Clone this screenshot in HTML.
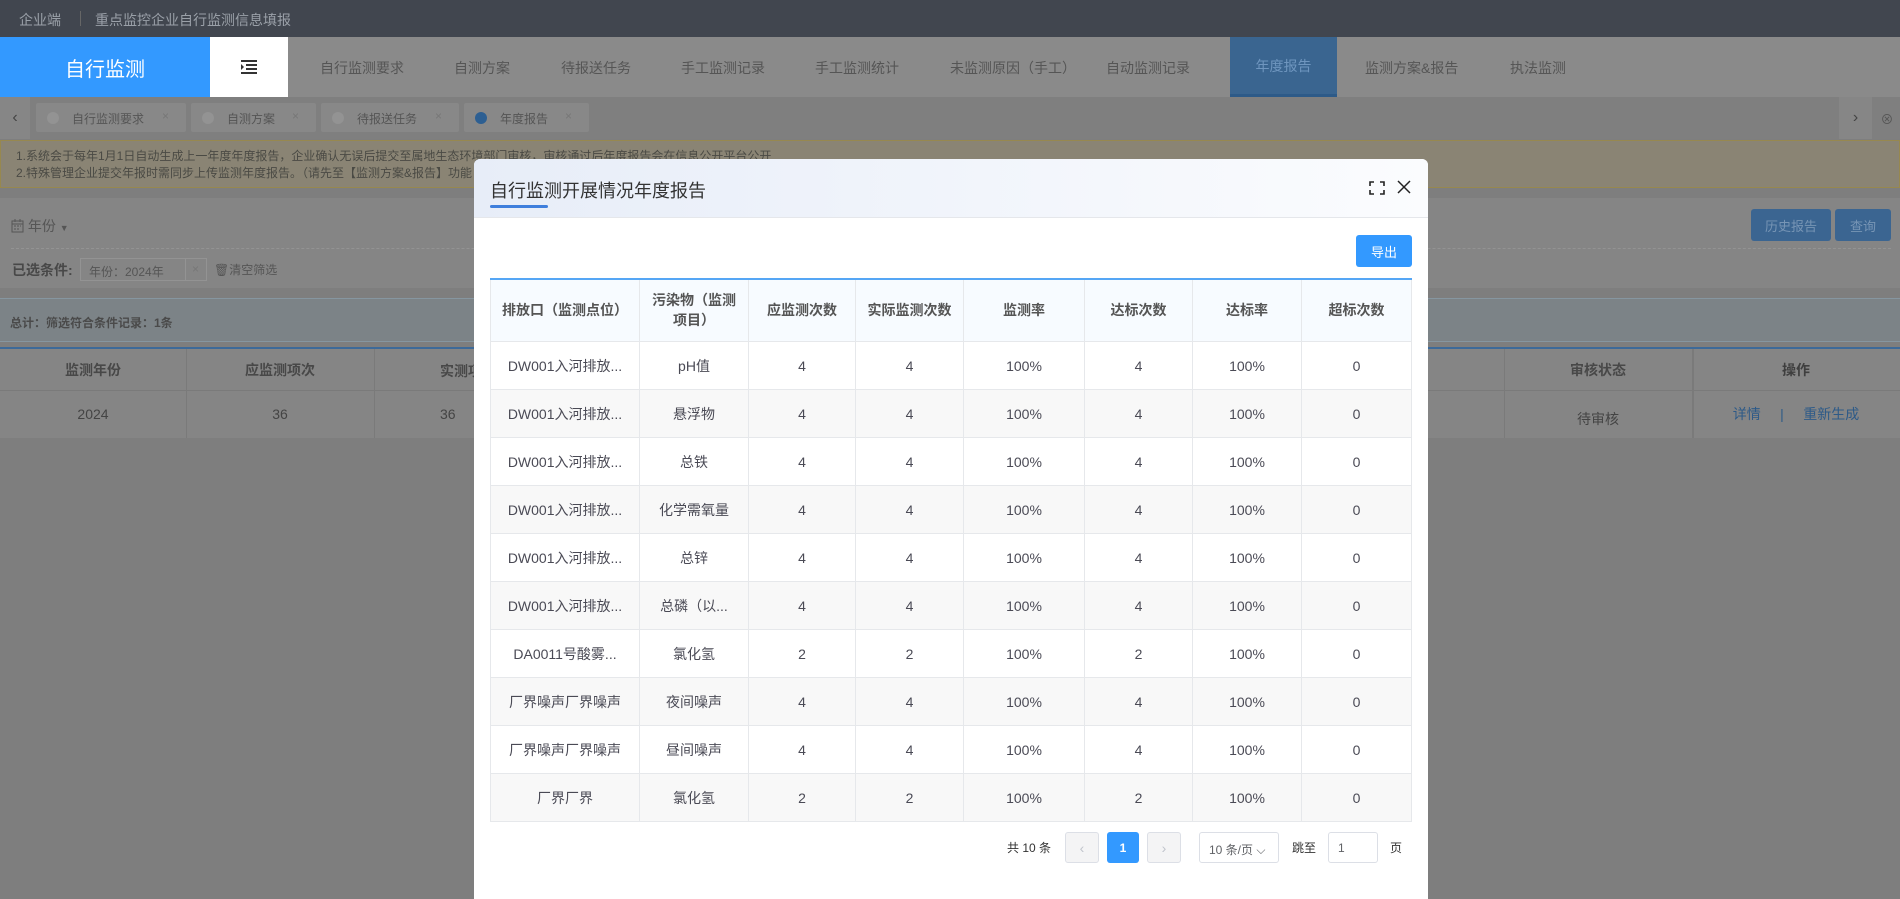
<!DOCTYPE html>
<html><head><meta charset="utf-8"><style>
*{margin:0;padding:0;box-sizing:border-box}
body{width:1900px;height:892px;overflow:hidden;background:#7e7e7e;font-family:"Liberation Sans","Noto Sans CJK SC",sans-serif;font-size:14px;color:#555;position:relative}
.a{position:absolute}
.c{display:flex;align-items:center;justify-content:center}
.h td{border:1px solid #e6e8eb;border-top:0;padding:0 8px;line-height:20px}
</style></head><body>
<div class="a" style="left:0;top:0;width:1900px;height:37px;background:#41464f;color:#9aa0a8;font-size:14px;">
<span class="a" style="left:19px;top:10px">企业端</span>
<span class="a" style="left:80px;top:11px;width:1px;height:15px;background:#666"></span>
<span class="a" style="left:95px;top:10px">重点监控企业自行监测信息填报</span>
</div>
<div class="a" style="left:0;top:37px;width:1900px;height:60px;background:#8a8a8a;"></div>
<div class="a c" style="left:0;top:37px;width:210px;height:60px;background:#3399ff;color:#fff;font-size:20px">自行监测</div>
<div class="a c" style="left:210px;top:37px;width:78px;height:60px;background:#fff;">
<svg width="18" height="14" viewBox="0 0 18 14"><path d="M1 1h16M6 5h11M6 9h11M1 13h16" stroke="#333" stroke-width="2"/><path d="M1 4v6l3-3z" fill="#333"/></svg></div>
<div class="a" style="left:288px;top:37px;width:1612px;height:60px;color:#555;font-size:14px;">
<span class="a" style="left:32px;top:21px">自行监测要求</span>
<span class="a" style="left:166px;top:21px">自测方案</span>
<span class="a" style="left:273px;top:21px">待报送任务</span>
<span class="a" style="left:393px;top:21px">手工监测记录</span>
<span class="a" style="left:527px;top:21px">手工监测统计</span>
<span class="a" style="left:662px;top:21px">未监测原因（手工）</span>
<span class="a" style="left:818px;top:21px">自动监测记录</span>
<span class="a c" style="left:942px;top:0;width:107px;height:60px;background:#3a6590;color:#6f96bf;border-bottom:3px solid #2d5a88">年度报告</span>
<span class="a" style="left:1077px;top:21px">监测方案&amp;报告</span>
<span class="a" style="left:1222px;top:21px">执法监测</span>
</div>
<div class="a" style="left:0;top:97px;width:1900px;height:42px;background:#7f7f7f;"></div>
<div class="a c" style="left:0;top:97px;width:30px;height:42px;background:#868686;color:#444;font-size:16px">‹</div>
<div class="a" style="left:36px;top:103px;width:150px;height:29px;background:#888;border-radius:2px;color:#555;font-size:12px"><span class="a" style="left:11px;top:9px;width:12px;height:12px;border-radius:50%;background:#939393"></span><span class="a" style="left:36px;top:7px">自行监测要求</span><span class="a" style="left:126px;top:6px;color:#777">×</span></div>
<div class="a" style="left:191px;top:103px;width:125px;height:29px;background:#888;border-radius:2px;color:#555;font-size:12px"><span class="a" style="left:11px;top:9px;width:12px;height:12px;border-radius:50%;background:#939393"></span><span class="a" style="left:36px;top:7px">自测方案</span><span class="a" style="left:101px;top:6px;color:#777">×</span></div>
<div class="a" style="left:321px;top:103px;width:138px;height:29px;background:#888;border-radius:2px;color:#555;font-size:12px"><span class="a" style="left:11px;top:9px;width:12px;height:12px;border-radius:50%;background:#939393"></span><span class="a" style="left:36px;top:7px">待报送任务</span><span class="a" style="left:114px;top:6px;color:#777">×</span></div>
<div class="a" style="left:464px;top:103px;width:125px;height:29px;background:#888;border-radius:2px;color:#555;font-size:12px"><span class="a" style="left:11px;top:9px;width:12px;height:12px;border-radius:50%;background:#2d5f92"></span><span class="a" style="left:36px;top:7px">年度报告</span><span class="a" style="left:101px;top:6px;color:#777">×</span></div>
<div class="a c" style="left:1839px;top:97px;width:33px;height:42px;background:#868686;color:#444;font-size:16px">›</div>
<div class="a c" style="left:1874px;top:97px;width:26px;height:42px;color:#555;font-size:13px">⊗</div>
<div class="a" style="left:0;top:140px;width:1900px;height:48px;background:#8a8474;border:1px solid #97884f;color:#4a4a44;font-size:12px;line-height:17px;padding:7px 0 0 15px">1.系统会于每年1月1日自动生成上一年度年度报告，企业确认无误后提交至属地生态环境部门审核，审核通过后年度报告会在信息公开平台公开<br>2.特殊管理企业提交年报时需同步上传监测年度报告。（请先至【监测方案&amp;报告】功能</div>
<div class="a" style="left:0;top:198px;width:1900px;height:90px;background:#858585;"></div>
<div class="a" style="left:11px;top:216px;color:#555;font-size:14px"><svg width="13" height="14" viewBox="0 0 13 14" style="vertical-align:-2px"><rect x="1" y="2" width="11" height="11" fill="none" stroke="#555"/><path d="M1 5h11M4 0v3M9 0v3M3 7h2M6 7h2M9 7h1M3 10h2M6 10h2" stroke="#555"/></svg> 年份 <span style="font-size:9px">▼</span></div>
<div class="a" style="left:11px;top:248px;width:1880px;border-top:1px dashed #939393"></div>
<div class="a" style="left:12px;top:260px;font-weight:bold;color:#484848;font-size:14px">已选条件:</div>
<div class="a" style="left:80px;top:258px;width:127px;height:23px;border:1px solid #939393;color:#555;font-size:12px"><span class="a" style="left:8px;top:4px">年份：2024年</span><span class="a" style="left:104px;top:0;height:21px;border-left:1px solid #939393;padding-left:6px;line-height:21px;color:#777">×</span></div>
<div class="a" style="left:214px;top:261px;color:#555;font-size:12px">🗑清空筛选</div>
<div class="a c" style="left:1751px;top:209px;width:80px;height:32px;background:#3b6591;border-radius:3px;color:#7795b5;font-size:13px">历史报告</div>
<div class="a c" style="left:1835px;top:209px;width:56px;height:32px;background:#3b6591;border-radius:3px;color:#7795b5;font-size:13px">查询</div>
<div class="a" style="left:0;top:298px;width:1900px;height:44px;background:#7c8387;border-top:1px solid #8696a0;border-bottom:1px solid #8696a0;color:#4a4a4a;font-size:12px;font-weight:bold;padding:15px 0 0 10px">总计：筛选符合条件记录：1条</div>
<div class="a" style="left:0;top:347px;width:1900px;height:91px;background:#858585;border-top:2px solid #3d6a99"></div>
<div class="a" style="left:0;top:390px;width:1900px;border-top:1px solid #7a7a7a"></div>
<div class="a" style="left:186px;top:349px;height:89px;border-left:1px solid #7a7a7a"></div>
<div class="a" style="left:374px;top:349px;height:89px;border-left:1px solid #7a7a7a"></div>
<div class="a" style="left:1504px;top:349px;height:89px;border-left:1px solid #7a7a7a"></div>
<div class="a" style="left:1692px;top:349px;height:89px;border-left:2px solid #7a7a7a"></div>
<div class="a c" style="left:0;top:349px;width:186px;height:41px;font-weight:bold;color:#484848">监测年份</div>
<div class="a c" style="left:186px;top:349px;width:188px;height:41px;font-weight:bold;color:#484848">应监测项次</div>
<div class="a" style="left:440px;top:361px;font-weight:bold;color:#484848">实测项</div>
<div class="a c" style="left:1504px;top:349px;width:188px;height:41px;font-weight:bold;color:#484848">审核状态</div>
<div class="a c" style="left:1692px;top:349px;width:208px;height:41px;font-weight:bold;color:#3f3f3f">操作</div>
<div class="a c" style="left:0;top:390px;width:186px;height:48px;color:#444">2024</div>
<div class="a c" style="left:186px;top:390px;width:188px;height:48px;color:#444">36</div>
<div class="a" style="left:440px;top:406px;color:#444">36</div>
<div class="a c" style="left:1504px;top:395px;width:188px;height:48px;color:#444">待审核</div>
<div class="a c" style="left:1692px;top:390px;width:208px;height:48px;color:#2d5a88;font-size:14px">详情&nbsp;&nbsp;&nbsp;&nbsp;&nbsp;|&nbsp;&nbsp;&nbsp;&nbsp;&nbsp;重新生成</div>
<div class="a" style="left:474px;top:159px;width:954px;height:740px;background:#fff;border-radius:6px 6px 0 0;overflow:hidden">
<div class="a" style="left:0;top:0;width:954px;height:59px;background:linear-gradient(90deg,#e7edf8,#fbfcfe);border-bottom:1px solid #e5e7eb"></div>
<div class="a" style="left:16px;top:18px;font-size:18px;color:#333">自行监测开展情况年度报告</div>
<div class="a" style="left:16px;top:46px;width:58px;height:3px;background:#3f7fdc;border-radius:2px"></div>
<svg class="a" style="left:895px;top:22px" width="16" height="14" viewBox="0 0 16 14"><path d="M1 5V1h4M11 1h4v4M15 9v4h-4M5 13H1V9" fill="none" stroke="#222" stroke-width="1.6"/></svg>
<svg class="a" style="left:923px;top:21px" width="14" height="14" viewBox="0 0 14 14"><path d="M1 1l12 12M13 1L1 13" stroke="#222" stroke-width="1.5"/></svg>
<div class="a c" style="left:882px;top:76px;width:56px;height:32px;background:#3399ff;border-radius:3px;color:#fff;font-size:13px">导出</div>
<table class="a" style="left:16px;top:119px;width:921px;border-collapse:collapse;table-layout:fixed;font-size:14px;text-align:center;border-top:2px solid #55a6f5">
<colgroup><col style="width:149px"><col style="width:109px"><col style="width:107px"><col style="width:108px"><col style="width:121px"><col style="width:108px"><col style="width:109px"><col style="width:110px"></colgroup>
<tr class="h" style="height:62px;background:#f7fbff;font-weight:bold;color:#555">
<td style="padding:0">排放口（监测点位）</td><td style="padding:0 12px">污染物（监测项目）</td><td>应监测次数</td><td style="padding:0">实际监测次数</td><td>监测率</td><td>达标次数</td><td>达标率</td><td>超标次数</td></tr>
</table>
<style>.r td{border:1px solid #e6e8eb;height:48px;color:#4a4a55}.r:nth-child(odd) td{background:#f8f8f8}</style>
<table class="a" style="left:16px;top:182px;width:921px;border-collapse:collapse;table-layout:fixed;font-size:14px;text-align:center">
<colgroup><col style="width:149px"><col style="width:109px"><col style="width:107px"><col style="width:108px"><col style="width:121px"><col style="width:108px"><col style="width:109px"><col style="width:110px"></colgroup>
<tr class="r"><td style="background:#fff">DW001入河排放...</td><td style="background:#fff">pH值</td><td style="background:#fff">4</td><td style="background:#fff">4</td><td style="background:#fff">100%</td><td style="background:#fff">4</td><td style="background:#fff">100%</td><td style="background:#fff">0</td></tr>
</table>
<table class="a" style="left:16px;top:230px;width:921px;border-collapse:collapse;table-layout:fixed;font-size:14px;text-align:center">
<colgroup><col style="width:149px"><col style="width:109px"><col style="width:107px"><col style="width:108px"><col style="width:121px"><col style="width:108px"><col style="width:109px"><col style="width:110px"></colgroup>
<tr class="r"><td>DW001入河排放...</td><td>悬浮物</td><td>4</td><td>4</td><td>100%</td><td>4</td><td>100%</td><td>0</td></tr>
<tr class="r"><td>DW001入河排放...</td><td>总铁</td><td>4</td><td>4</td><td>100%</td><td>4</td><td>100%</td><td>0</td></tr>
<tr class="r"><td>DW001入河排放...</td><td>化学需氧量</td><td>4</td><td>4</td><td>100%</td><td>4</td><td>100%</td><td>0</td></tr>
<tr class="r"><td>DW001入河排放...</td><td>总锌</td><td>4</td><td>4</td><td>100%</td><td>4</td><td>100%</td><td>0</td></tr>
<tr class="r"><td>DW001入河排放...</td><td>总磷（以...</td><td>4</td><td>4</td><td>100%</td><td>4</td><td>100%</td><td>0</td></tr>
<tr class="r"><td>DA0011号酸雾...</td><td>氯化氢</td><td>2</td><td>2</td><td>100%</td><td>2</td><td>100%</td><td>0</td></tr>
<tr class="r"><td>厂界噪声厂界噪声</td><td>夜间噪声</td><td>4</td><td>4</td><td>100%</td><td>4</td><td>100%</td><td>0</td></tr>
<tr class="r"><td>厂界噪声厂界噪声</td><td>昼间噪声</td><td>4</td><td>4</td><td>100%</td><td>4</td><td>100%</td><td>0</td></tr>
<tr class="r"><td>厂界厂界</td><td>氯化氢</td><td>2</td><td>2</td><td>100%</td><td>2</td><td>100%</td><td>0</td></tr>
</table>
<div class="a" style="left:533px;top:680px;font-size:12px;color:#333">共 10 条</div>
<div class="a c" style="left:591px;top:673px;width:34px;height:31px;border:1px solid #dcdfe6;background:#f4f4f5;border-radius:3px;color:#c0c4cc">‹</div>
<div class="a c" style="left:633px;top:673px;width:32px;height:31px;background:#3399ff;border-radius:3px;color:#fff;font-size:12px;font-weight:bold">1</div>
<div class="a c" style="left:673px;top:673px;width:34px;height:31px;border:1px solid #dcdfe6;background:#f4f4f5;border-radius:3px;color:#c0c4cc">›</div>
<div class="a" style="left:725px;top:673px;width:80px;height:31px;border:1px solid #dcdfe6;border-radius:3px;font-size:12px;color:#606266;padding:8px 0 0 9px">10 条/页 ⌵</div>
<div class="a" style="left:818px;top:680px;font-size:12px;color:#333">跳至</div>
<div class="a" style="left:854px;top:673px;width:50px;height:31px;border:1px solid #dcdfe6;border-radius:3px;font-size:12px;color:#606266;padding:8px 0 0 9px">1</div>
<div class="a" style="left:916px;top:680px;font-size:12px;color:#333">页</div>
</div>
</body></html>
